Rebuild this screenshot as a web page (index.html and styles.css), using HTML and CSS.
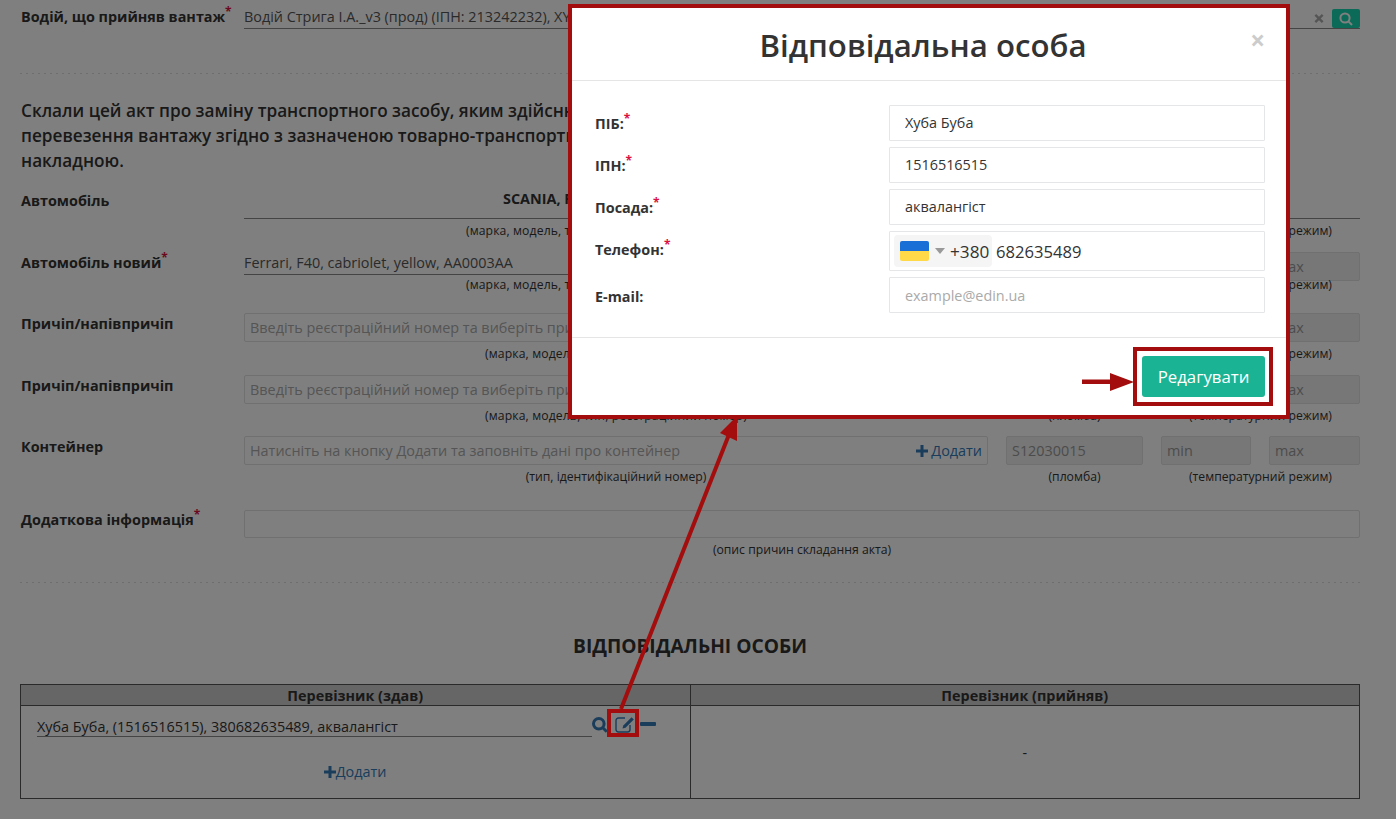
FILE: index.html
```html
<!DOCTYPE html>
<html>
<head>
	<meta http-equiv="Content-Type" content="text/html; charset=utf-8">
	<title>Акт</title>
	<link rel="stylesheet" href="styles.css">
</head>
<body>
<div class="page">
	<div class="row row-first">
		<label class="lbl">Водій, що прийняв вантаж<sup>*</sup></label>
		<div class="line wide">
			<span class="line-text">Водій Стрига І.А._v3 (прод) (ІПН: 213242232), XY</span>
			<svg class="clear-ico" viewBox="0 0 12 12"><path d="M2.6 .6 6 4 9.4 .6 11.400 2.600 8 6 11.400 9.400 9.400 11.400 6 8 2.600 11.400 .6 9.400 4 6 .6 2.600z"/></svg>
			<span class="find-btn"><svg viewBox="0 0 14 14"><circle cx="6" cy="6" r="4.6"/><path d="M9.400 9.400l3.600 3.600"/></svg></span>
		</div>
	</div>
	<div class="dots dots-top"></div>

	<p class="lead">Склали цей акт про заміну транспортного засобу, яким здійснювалось<br>перевезення вантажу згідно з зазначеною товарно-транспортною<br>накладною.</p>

	<div class="row row-car">
		<label class="lbl">Автомобіль</label>
		<div class="line wide line-bold">SCANIA, FH, тягач, білий, AA0001AA</div>
		<div class="hint col-main">(марка, модель, тип, колір, реєстраційний номер)</div>
		<div class="hint col-temp">(температурний режим)</div>
	</div>

	<div class="row row-new">
		<label class="lbl">Автомобіль новий<sup>*</sup></label>
		<div class="line col-main">Ferrari, F40, cabriolet, yellow, AA0003AA</div>
		<input class="inp inp-off col-seal" disabled>
		<input class="inp inp-off col-min" placeholder="min" disabled>
		<input class="inp inp-off col-max" placeholder="max" disabled>
		<div class="hint col-main">(марка, модель, тип, колір, реєстраційний номер)</div>
		<div class="hint col-seal">(пломба)</div>
		<div class="hint col-temp">(температурний режим)</div>
	</div>

	<div class="row row-input">
		<label class="lbl">Причіп/напівпричіп</label>
		<input class="inp col-main" placeholder="Введіть реєстраційний номер та виберіть причіп зі списку">
		<input class="inp inp-off col-seal" disabled>
		<input class="inp inp-off col-min" placeholder="min" disabled>
		<input class="inp inp-off col-max" placeholder="max" disabled>
		<div class="hint col-main">(марка, модель, тип, реєстраційний номер)</div>
		<div class="hint col-seal">(пломба)</div>
		<div class="hint col-temp">(температурний режим)</div>
	</div>

	<div class="row row-input">
		<label class="lbl">Причіп/напівпричіп</label>
		<input class="inp col-main" placeholder="Введіть реєстраційний номер та виберіть причіп зі списку">
		<input class="inp inp-off col-seal" disabled>
		<input class="inp inp-off col-min" placeholder="min" disabled>
		<input class="inp inp-off col-max" placeholder="max" disabled>
		<div class="hint col-main">(марка, модель, тип, реєстраційний номер)</div>
		<div class="hint col-seal">(пломба)</div>
		<div class="hint col-temp">(температурний режим)</div>
	</div>

	<div class="row row-input row-cont">
		<label class="lbl">Контейнер</label>
		<div class="inp col-main cont-box">
			<span class="ph">Натисніть на кнопку Додати та заповніть дані про контейнер</span>
			<a class="add"><svg class="plus" viewBox="0 0 12 12"><path d="M4.5 0h3v4.5H12v3H7.500V12h-3V7.500H0v-3h4.500z"/></svg> Додати</a>
		</div>
		<input class="inp inp-off col-seal" value="S12030015" disabled>
		<input class="inp inp-off col-min" placeholder="min" disabled>
		<input class="inp inp-off col-max" placeholder="max" disabled>
		<div class="hint hint-plain col-main">(тип, ідентифікаційний номер)</div>
		<div class="hint col-seal">(пломба)</div>
		<div class="hint col-temp">(температурний режим)</div>
	</div>

	<div class="row row-info">
		<label class="lbl">Додаткова інформація<sup>*</sup></label>
		<input class="inp wide">
		<div class="hint wide">(опис причин складання акта)</div>
	</div>
	<div class="dots dots-low"></div>

	<h3 class="sect">ВІДПОВІДАЛЬНІ ОСОБИ</h3>

	<table class="people">
		<tr>
			<th>Перевізник (здав)</th>
			<th>Перевізник (прийняв)</th>
		</tr>
		<tr>
			<td>
				<div class="person">
					<div class="person-line">Хуба Буба, (1516516515), 380682635489, аквалангіст</div>
					<svg class="ico-find" viewBox="0 0 16 16"><circle cx="6.800" cy="6.800" r="5.300"/><path d="M10.800 10.800l4 4"/></svg>
					<svg class="ico-edit" viewBox="0 0 20 18"><path class="ico-frame" d="M10 2H3.500A2.500 2.500 0 0 0 1 4.500v9A2.500 2.500 0 0 0 3.500 16h9a2.500 2.500 0 0 0 2.500-2.500V9"/><path d="M16.600 1.200 18.800 3.400 10.500 11.700 7.500 12.500 8.300 9.500z"/></svg>
					<span class="ico-minus"></span>
				</div>
				<a class="add add-person"><svg class="plus" viewBox="0 0 12 12"><path d="M4.500 0h3v4.500H12v3H7.500V12h-3V7.500H0v-3h4.500z"/></svg>Додати</a>
			</td>
			<td class="empty">-</td>
		</tr>
	</table>
</div>

<div class="backdrop"></div>

<div class="modal">
	<div class="modal-head">
		<h2>Відповідальна особа</h2>
		<span class="close">×</span>
	</div>
	<div class="modal-body">
		<div class="m-row">
			<label>ПІБ:<sup>*</sup></label>
			<input class="m-inp" value="Хуба Буба">
		</div>
		<div class="m-row">
			<label>ІПН:<sup>*</sup></label>
			<input class="m-inp" value="1516516515">
		</div>
		<div class="m-row">
			<label>Посада:<sup>*</sup></label>
			<input class="m-inp" value="аквалангіст">
		</div>
		<div class="m-row m-row-phone">
			<label>Телефон:<sup>*</sup></label>
			<div class="m-inp phone">
				<span class="chip">
					<span class="flag"></span>
					<span class="caret"></span>
					<span>+380</span>
				</span>
				<span class="phone-num">682635489</span>
			</div>
		</div>
		<div class="m-row m-row-mail">
			<label>E-mail:</label>
			<input class="m-inp" placeholder="example@edin.ua">
		</div>
	</div>
	<div class="modal-foot">
		<button class="save">Редагувати</button>
	</div>
</div>

<!-- red marks on top of the screenshot -->
<div class="mark mark-save"></div>
<div class="mark mark-edit"></div>
<svg class="arrows" viewBox="0 0 1396 819">
	<path d="M621 709 730 432" class="shaft"/>
	<path d="M737 416 720 433 737 441z"/>
	<path d="M1082 379.500H1110V373L1134 382 1110 391V384H1082z"/>
</svg>
</body>
</html>
```

FILE: styles.css
```css
* {
	box-sizing: border-box;
}
html, body {
	margin: 0;
	height: 819px;
	overflow: hidden;
}
body {
	position: relative;
	font-family: "Open Sans", sans-serif;
	font-size: 14.4px;
	color: #333;
	background: #fff;
}
sup {
	color: #d9123f;
	font-size: 12px;
	line-height: 0;
	vertical-align: 6px;
}

/* page under the backdrop */
.page {
	padding: 9px 36px 0 20px;
}
.row {
	display: grid;
	grid-template-columns: 224px 744px 155px 108px 109px;
	margin-bottom: 12px;
}
.lbl {
	padding-left: 1px;
	font-weight: 700;
	grid-column: 1;
	grid-row: 1;
}
.wide {
	grid-column: 2 / 6;
}
.col-main {
	grid-column: 2;
}
.col-seal {
	grid-column: 3;
	margin-left: 18px;
}
.col-min {
	grid-column: 4;
	margin-left: 18px;
}
.col-max {
	grid-column: 5;
	margin-left: 18px;
}
.col-temp {
	grid-column: 4 / 6;
	margin-left: 18px;
}
.hint {
	grid-row: 2;
	text-align: center;
	font-size: 12.2px;
	line-height: 18px;
	padding-top: 3px;
}
.hint.col-main {
	letter-spacing: .12px;
}
.hint.hint-plain {
	letter-spacing: 0;
}

.line {
	display: flex;
	align-items: center;
	height: 20px;
	border-bottom: 1px solid #888;
	color: #555;
	white-space: nowrap;
}
.line-text {
	flex: 1;
	line-height: 16px;
	margin-bottom: 3px;
}
.line-bold {
	padding-left: 259px;
	font-weight: 700;
	color: #333;
}
.clear-ico {
	width: 10px;
	height: 11px;
	fill: #aaa;
	margin-right: 8px;
}
.find-btn {
	display: flex;
	align-items: center;
	justify-content: center;
	width: 28px;
	height: 19px;
	background: #18d6b0;
	border-radius: 2px;
}
.find-btn svg {
	width: 14px;
	height: 14px;
	fill: none;
	stroke: #fff;
	stroke-width: 2;
}
.row-first .lbl {
	line-height: 16px;
}
.dots {
	height: 1px;
	background: repeating-linear-gradient(90deg, #ddd 0 2px, transparent 2px 6px);
}
.dots-top {
	margin-top: 44px;
}
.lead {
	margin: 24px 0 0;
	padding-left: 1px;
	font-size: 17.2px;
	font-weight: 600;
	line-height: 25px;
}
.row-car {
	margin-top: 14px;
	margin-bottom: 0;
}
.row-car .line {
	height: 32px;
	padding-bottom: 9px;
}
.row-car .lbl {
	line-height: 28px;
}
.row-new {
	margin-top: 13px;
	margin-bottom: 19px;
}
.row-new .line {
	height: 22px;
	padding-bottom: 2px;
}
.row-new .inp {
	margin-top: -1px;
}
.row-new .hint {
	padding-top: 2px;
	margin-top: -7px;
}
.row-input .lbl {
	padding-top: 1px;
}
.inp {
	display: block;
	height: 29px;
	min-width: 0;
	width: auto;
	padding: 0 5px;
	border: 1px solid #e0e0e0;
	border-radius: 2px;
	background: #fff;
	font: 14.4px "Open Sans", sans-serif;
	color: #555;
}
.inp::placeholder,
.ph {
	color: #aaa;
}
.inp-off {
	background: #eee;
	color: #999;
}
.inp-off::placeholder {
	color: #999;
}
.cont-box {
	display: flex;
	align-items: center;
	justify-content: space-between;
}
.add {
	color: #337ab7;
	white-space: nowrap;
}
.plus {
	width: 12px;
	height: 12px;
	fill: #337ab7;
	vertical-align: -1px;
}
.row-cont {
	margin-top: -1px;
	margin-bottom: 0;
}
.row-info {
	margin-top: 24px;
}
.row-info .inp {
	height: 28px;
}
.dots-low {
	margin-top: 23px;
}
.sect {
	margin: 51px 0 26px;
	text-align: center;
	font-size: 19.2px;
	font-weight: 700;
	line-height: 24px;
}
.people {
	width: 1340px;
	border-collapse: collapse;
	table-layout: fixed;
}
.people th,
.people td {
	border: 1px solid #555;
	padding: 0;
	text-align: center;
}
.people th {
	height: 21px;
	background: #ccc;
	font-weight: 700;
	line-height: 19px;
}
.people td {
	height: 93px;
	vertical-align: top;
}
.people td.empty {
	vertical-align: middle;
}
.person {
	display: flex;
	align-items: flex-start;
	padding: 10px 0 0 16px;
}
.person-line {
	width: 555px;
	height: 21px;
	text-align: left;
	border-bottom: 1px solid #888;
	line-height: 21px;
	white-space: nowrap;
}
.ico-find {
	width: 16px;
	height: 16px;
	margin: 1px 0 0 0;
	fill: none;
	stroke: #337ab7;
	stroke-width: 3;
}
.ico-edit {
	width: 20px;
	height: 18px;
	margin: 0 0 0 7px;
	fill: #337ab7;
}
.ico-edit .ico-frame {
	fill: none;
	stroke: #337ab7;
	stroke-width: 1.400;
}
.ico-minus {
	width: 16px;
	height: 4px;
	margin: 6px 0 0 5px;
	background: #337ab7;
	border-radius: 1px;
}
.add-person {
	display: block;
	width: 668px;
	margin-top: 25px;
	text-align: center;
}

/* dark layer and dialog */
.backdrop {
	position: absolute;
	inset: 0;
	background: rgba(0, 0, 0, .5);
}
.modal {
	position: absolute;
	left: 568px;
	top: 4px;
	width: 722px;
	height: 415px;
	background: #fff;
	border: 4px solid #a30d0d;
}
.modal-head {
	position: relative;
	height: 73px;
	padding-right: 12px;
	border-bottom: 1px solid #e5e5e5;
	text-align: center;
}
.modal-head h2 {
	margin: 0;
	font-size: 31.2px;
	font-weight: 600;
	line-height: 74px;
	color: #333;
}
.close {
	position: absolute;
	right: 21px;
	top: 17px;
	font-size: 26px;
	font-weight: 700;
	line-height: 30px;
	color: #ccc;
}
.modal-body {
	padding: 24px 21px 24px 23px;
	display: flex;
	flex-direction: column;
	gap: 6px;
}
.m-row {
	display: flex;
	align-items: center;
}
.m-row label {
	width: 294px;
	font-weight: 700;
}
.m-row-phone label {
	padding-bottom: 4px;
}
.m-row-mail label {
	padding-top: 2px;
}
.m-inp {
	flex: 1;
	height: 36px;
	padding: 0 15px 2px;
	border: 1px solid #e5e6e7;
	border-radius: 1px;
	background: #fff;
	font: 14.4px "Open Sans", sans-serif;
	color: #333;
	outline: none;
}
.m-inp::placeholder {
	color: #aaa;
}
.m-row-mail .m-inp {
	padding-bottom: 0;
}
.phone {
	display: flex;
	align-items: center;
	height: 40px;
	padding: 0 4px;
	font-size: 16.6px;
}
.chip {
	display: flex;
	align-items: center;
	width: 98px;
	height: 32px;
	padding-left: 6px;
	background: #f5f5f5;
	border-radius: 4px;
	font-size: 17.2px;
}
.flag {
	width: 29px;
	height: 20px;
	border-radius: 2px;
	background: linear-gradient(#1a6fd6 50%, #ffd947 50%);
}
.caret {
	width: 0;
	height: 0;
	margin: 0 5px 0 6px;
	border: 5px solid transparent;
	border-top: 6px solid #999;
	border-bottom: 0;
}
.phone-num {
	margin-left: 4px;
}
.modal-foot {
	border-top: 1px solid #e5e5e5;
	padding: 18px 21px 0 0;
	text-align: right;
}
.save {
	width: 123px;
	height: 41px;
	border: 0;
	border-radius: 3px;
	background: #1ab394;
	color: #fff;
	font: 16.8px "Open Sans", sans-serif;
}

/* annotation marks */
.mark {
	position: absolute;
	border: 4px solid #a30d0d;
}
.mark-save {
	left: 1133px;
	top: 347px;
	width: 140px;
	height: 59px;
}
.mark-edit {
	left: 607px;
	top: 709px;
	width: 32px;
	height: 28px;
}
.arrows {
	position: absolute;
	left: 0;
	top: 0;
	width: 1396px;
	height: 819px;
	fill: #a30d0d;
	pointer-events: none;
}
.arrows .shaft {
	fill: none;
	stroke: #a30d0d;
	stroke-width: 4;
}
```
